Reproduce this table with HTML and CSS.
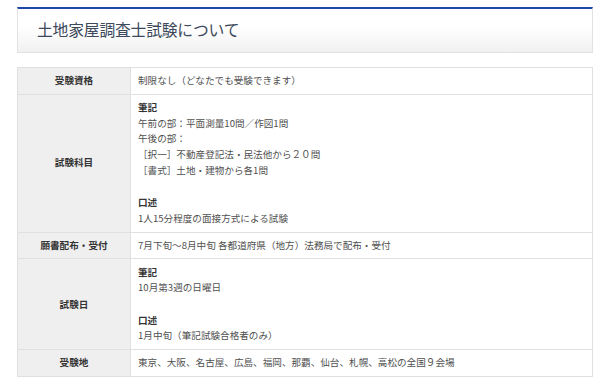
FILE: index.html
```html
<!DOCTYPE html>
<html lang="ja">
  <head>
    <meta charset="UTF-8" />
    <title>土地家屋調査士試験について</title>
    <link rel="stylesheet" href="styles.css">
  </head>
  <body>
    <div class="container">
      <div class="heading">
        <h2>土地家屋調査士試験について</h2>
      </div>
      <table class="exam-table">
        <tr>
          <th>受験資格</th>
          <td>制限なし（どなたでも受験できます）</td>
        </tr>
        <tr>
          <th>試験科目</th>
          <td>
            <div class="group">
              <strong>筆記</strong><br />
              午前の部：平面測量10問／作図1問<br />
              午後の部：<br />
              ［択一］不動産登記法・民法他から２０問<br />
              ［書式］土地・建物から各1問
            </div>
            <div class="group">
              <strong>口述</strong><br />
              1人15分程度の面接方式による試験
            </div>
          </td>
        </tr>
        <tr>
          <th>願書配布・受付</th>
          <td>7月下旬～8月中旬 各都道府県（地方）法務局で配布・受付</td>
        </tr>
        <tr>
          <th>試験日</th>
          <td>
            <div class="group">
              <strong>筆記</strong><br />
              10月第3週の日曜日
            </div>
            <div class="group">
              <strong>口述</strong><br />
              1月中旬（筆記試験合格者のみ）
            </div>
          </td>
        </tr>
        <tr>
          <th>受験地</th>
          <td>東京、大阪、名古屋、広島、福岡、那覇、仙台、札幌、高松の全国９会場</td>
        </tr>
      </table>
    </div>
  </body>
</html>
```

FILE: styles.css
```css
* {
  margin: 0;
  padding: 0;
  box-sizing: border-box;
}

body {
  font-family: "Noto Sans CJK JP", "Noto Sans", sans-serif;
  background: #fff;
  color: #555;
}

.container {
  width: 576px;
  margin: 7px 0 0 17px;
}

.heading {
  height: 46px;
  border: 1px solid #e2e2e2;
  border-top: 2px solid #1f47a8;
  background: linear-gradient(to bottom, #fff 40%, #f1f1f1 100%);
  display: flex;
  align-items: center;
  padding: 0 19px 2px;
}

.heading h2 {
  font-size: 15.8px;
  font-weight: 400;
  color: #3d4a5c;
  letter-spacing: -0.2px;
}

.exam-table {
  width: 100%;
  margin-top: 14px;
  border-collapse: collapse;
  font-size: 9.6px;
  line-height: 15.6px;
}

.exam-table th,
.exam-table td {
  border: 1px solid #e0e0e0;
  padding: 5.2px 7px;
}

.exam-table th {
  width: 113px;
  background: #efefef;
  color: #333;
  font-weight: 700;
  text-align: center;
  vertical-align: middle;
}

.exam-table td {
  text-align: left;
  color: #505050;
}

.exam-table strong {
  color: #333;
}

.group + .group {
  margin-top: 17px;
}
```
